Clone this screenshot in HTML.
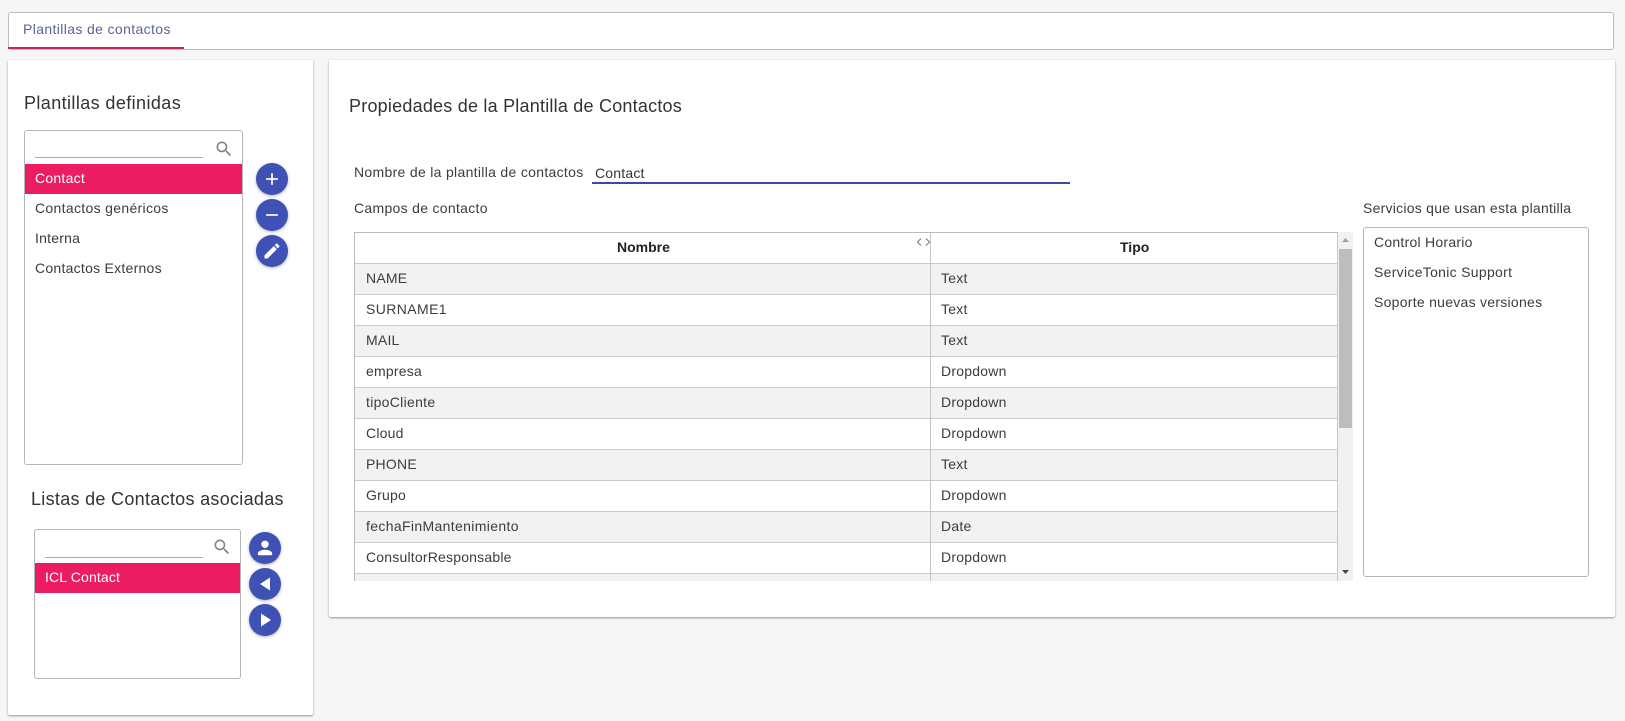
<!DOCTYPE html>
<html><head><meta charset="utf-8">
<style>
html,body{margin:0;padding:0;width:1625px;height:721px;overflow:hidden;background:#f6f6f6;font-family:"Liberation Sans",sans-serif;color:#3a3a3a}
.a{position:absolute;box-sizing:border-box}
.t{position:absolute;white-space:nowrap;font-size:14px;line-height:20px;color:#3c3c3c;letter-spacing:.22px}
.h{font-size:18px;line-height:24px;color:#333}
.card{background:#fff;box-shadow:0 1px 2px rgba(0,0,0,.4);border-radius:2px}
.box{background:#fff;border:1px solid #b5b5b5;border-radius:3px}
.fab{position:absolute;width:32px;height:32px;border-radius:50%;background:#3f51b5;box-shadow:0 1px 3px rgba(0,0,0,.3)}
.fab svg{position:absolute;left:6px;top:6px;width:20px;height:20px;fill:#fff}
.sel{background:#ec1c63}
.row{position:absolute;left:0;width:983px;height:31px;border-bottom:1px solid #cbcbcb;box-sizing:border-box}
.g{background:#f2f2f2}
</style></head><body>

<div class="a" style="left:8px;top:12px;width:1606px;height:38px;background:#fff;border:1px solid #bdbdbd;border-radius:3px"></div>
<div class="a" style="left:8px;top:47px;width:176px;height:2px;background:#c2275f"></div>
<div class="t" style="left:23px;top:19px;color:#5a6399;letter-spacing:.37px">Plantillas de contactos</div>

<div class="a card" style="left:8px;top:60px;width:305px;height:655px"></div>
<div class="t h" style="left:24px;top:91px;letter-spacing:.4px">Plantillas definidas</div>

<div class="a box" style="left:24px;top:130px;width:219px;height:335px"></div>
<div class="a" style="left:35px;top:157px;width:168px;height:1px;background:#aaa"></div>
<svg class="a" style="left:214px;top:139px" width="20" height="20" viewBox="0 0 24 24" fill="#858585"><path d="M15.5 14h-.79l-.28-.27A6.47 6.47 0 0 0 16 9.5 6.5 6.5 0 1 0 9.5 16c1.61 0 3.09-.59 4.23-1.57l.27.28v.79l5 4.99L20.49 19l-4.99-5zm-6 0C7.01 14 5 11.99 5 9.5S7.01 5 9.5 5 14 7.01 14 9.5 11.99 14 9.5 14z"/></svg>
<div class="a sel" style="left:25px;top:164px;width:217px;height:30px"></div>
<div class="t" style="left:35px;top:168px;color:#fff;letter-spacing:.25px">Contact</div>
<div class="t" style="left:35px;top:198px;letter-spacing:.32px">Contactos genéricos</div>
<div class="t" style="left:35px;top:228px">Interna</div>
<div class="t" style="left:35px;top:258px;letter-spacing:.26px">Contactos Externos</div>

<div class="fab" style="left:256px;top:163px"><svg viewBox="0 0 24 24"><path d="M19 13h-6v6h-2v-6H5v-2h6V5h2v6h6v2z"/></svg></div>
<div class="fab" style="left:256px;top:199px"><svg viewBox="0 0 24 24"><path d="M19 13H5v-2h14v2z"/></svg></div>
<div class="fab" style="left:256px;top:235px"><svg viewBox="0 0 24 24"><path d="M3 17.250V21h3.750L17.810 9.940l-3.750-3.750L3 17.250zM20.710 7.040a1 1 0 0 0 0-1.410l-2.340-2.340a1 1 0 0 0-1.410 0l-1.830 1.830 3.750 3.750 1.830-1.830z"/></svg></div>

<div class="t h" style="left:31px;top:487px;letter-spacing:.3px">Listas de Contactos asociadas</div>
<div class="a box" style="left:34px;top:529px;width:207px;height:150px"></div>
<div class="a" style="left:45px;top:557px;width:158px;height:1px;background:#aaa"></div>
<svg class="a" style="left:212px;top:537px" width="20" height="20" viewBox="0 0 24 24" fill="#858585"><path d="M15.5 14h-.79l-.28-.27A6.47 6.47 0 0 0 16 9.5 6.5 6.5 0 1 0 9.5 16c1.61 0 3.09-.59 4.23-1.57l.27.28v.79l5 4.99L20.49 19l-4.99-5zm-6 0C7.01 14 5 11.99 5 9.5S7.01 5 9.5 5 14 7.01 14 9.5 11.99 14 9.5 14z"/></svg>
<div class="a sel" style="left:35px;top:563px;width:205px;height:30px"></div>
<div class="t" style="left:45px;top:567px;color:#fff;letter-spacing:.15px">ICL Contact</div>

<div class="fab" style="left:249px;top:532px"><svg style="left:4px;top:4px;width:24px;height:24px" viewBox="0 0 24 24"><path d="M12 12a3.700 3.700 0 1 0 0-7.400 3.700 3.700 0 0 0 0 7.400zm0 1.800c-2.800 0-7.200 1.300-7.200 3.700v.7a1 1 0 0 0 1 1h12.400a1 1 0 0 0 1-1v-.7c0-2.400-4.400-3.700-7.200-3.700z"/></svg></div>
<div class="fab" style="left:249px;top:568px"><svg style="left:4px;top:4px;width:24px;height:24px" viewBox="0 0 24 24"><path d="M17 5.500v13L7 12z"/></svg></div>
<div class="fab" style="left:249px;top:604px"><svg style="left:4px;top:4px;width:24px;height:24px" viewBox="0 0 24 24"><path d="M8 5.500v13L18 12z"/></svg></div>

<div class="a card" style="left:329px;top:60px;width:1286px;height:557px"></div>
<div class="t h" style="left:349px;top:94px;letter-spacing:.22px">Propiedades de la Plantilla de Contactos</div>
<div class="t" style="left:354px;top:162px;letter-spacing:.31px">Nombre de la plantilla de contactos</div>
<div class="t" style="left:595px;top:163px;color:#333;letter-spacing:.2px">Contact</div>
<div class="a" style="left:592px;top:182px;width:478px;height:2px;background:#3d4a9e"></div>
<div class="t" style="left:354px;top:198px;letter-spacing:.3px">Campos de contacto</div>
<div class="t" style="left:1363px;top:198px;letter-spacing:.25px">Servicios que usan esta plantilla</div>

<div class="a" style="left:354px;top:232px;width:984px;height:349px;overflow:hidden;background:#fff;border-left:1px solid #bbb;border-top:1px solid #bbb;border-right:1px solid #c8c8c8">
  <div class="row" style="top:0"></div>
  <div class="row g" style="top:31px"></div>
  <div class="row" style="top:62px"></div>
  <div class="row g" style="top:93px"></div>
  <div class="row" style="top:124px"></div>
  <div class="row g" style="top:155px"></div>
  <div class="row" style="top:186px"></div>
  <div class="row g" style="top:217px"></div>
  <div class="row" style="top:248px"></div>
  <div class="row g" style="top:279px"></div>
  <div class="row" style="top:310px"></div>
  <div class="row g" style="top:341px"></div>
  <div class="a" style="left:575px;top:0;width:1px;height:349px;background:#c4c4c4"></div>
</div>
<div class="t" style="left:617px;top:237px;font-weight:bold;color:#222;letter-spacing:0">Nombre</div>
<div class="t" style="left:1120px;top:237px;font-weight:bold;color:#222;letter-spacing:0">Tipo</div>
<svg class="a" style="left:916px;top:237px" width="15" height="10" viewBox="0 0 15 10" fill="none" stroke="#777" stroke-width="1"><path d="M5 1.500 1.500 5 5 8.500M10 1.500 13.500 5 10 8.500"/></svg>

<div class="t" style="left:366px;top:268px">NAME</div><div class="t" style="left:941px;top:268px">Text</div>
<div class="t" style="left:366px;top:299px;letter-spacing:.4px">SURNAME1</div><div class="t" style="left:941px;top:299px">Text</div>
<div class="t" style="left:366px;top:330px">MAIL</div><div class="t" style="left:941px;top:330px">Text</div>
<div class="t" style="left:366px;top:361px">empresa</div><div class="t" style="left:941px;top:361px">Dropdown</div>
<div class="t" style="left:366px;top:392px;letter-spacing:.3px">tipoCliente</div><div class="t" style="left:941px;top:392px">Dropdown</div>
<div class="t" style="left:366px;top:423px">Cloud</div><div class="t" style="left:941px;top:423px">Dropdown</div>
<div class="t" style="left:366px;top:454px">PHONE</div><div class="t" style="left:941px;top:454px">Text</div>
<div class="t" style="left:366px;top:485px">Grupo</div><div class="t" style="left:941px;top:485px">Dropdown</div>
<div class="t" style="left:366px;top:516px;letter-spacing:.35px">fechaFinMantenimiento</div><div class="t" style="left:941px;top:516px">Date</div>
<div class="t" style="left:366px;top:547px;letter-spacing:.2px">ConsultorResponsable</div><div class="t" style="left:941px;top:547px">Dropdown</div>

<div class="a" style="left:1338px;top:232px;width:15px;height:349px;background:#f1f1f1"></div>
<div class="a" style="left:1339px;top:249px;width:13px;height:179px;background:#bdbdbd"></div>
<svg class="a" style="left:1341px;top:237px" width="9" height="6"><path d="M4.500 1 8 5H1z" fill="#a0a0a0"/></svg>
<svg class="a" style="left:1341px;top:569px" width="9" height="6"><path d="M1 1h7L4.500 5z" fill="#444"/></svg>

<div class="a box" style="left:1363px;top:227px;width:226px;height:350px"></div>
<div class="t" style="left:1374px;top:232px;letter-spacing:.25px">Control Horario</div>
<div class="t" style="left:1374px;top:262px;letter-spacing:.3px">ServiceTonic Support</div>
<div class="t" style="left:1374px;top:292px;letter-spacing:.27px">Soporte nuevas versiones</div>

</body></html>
